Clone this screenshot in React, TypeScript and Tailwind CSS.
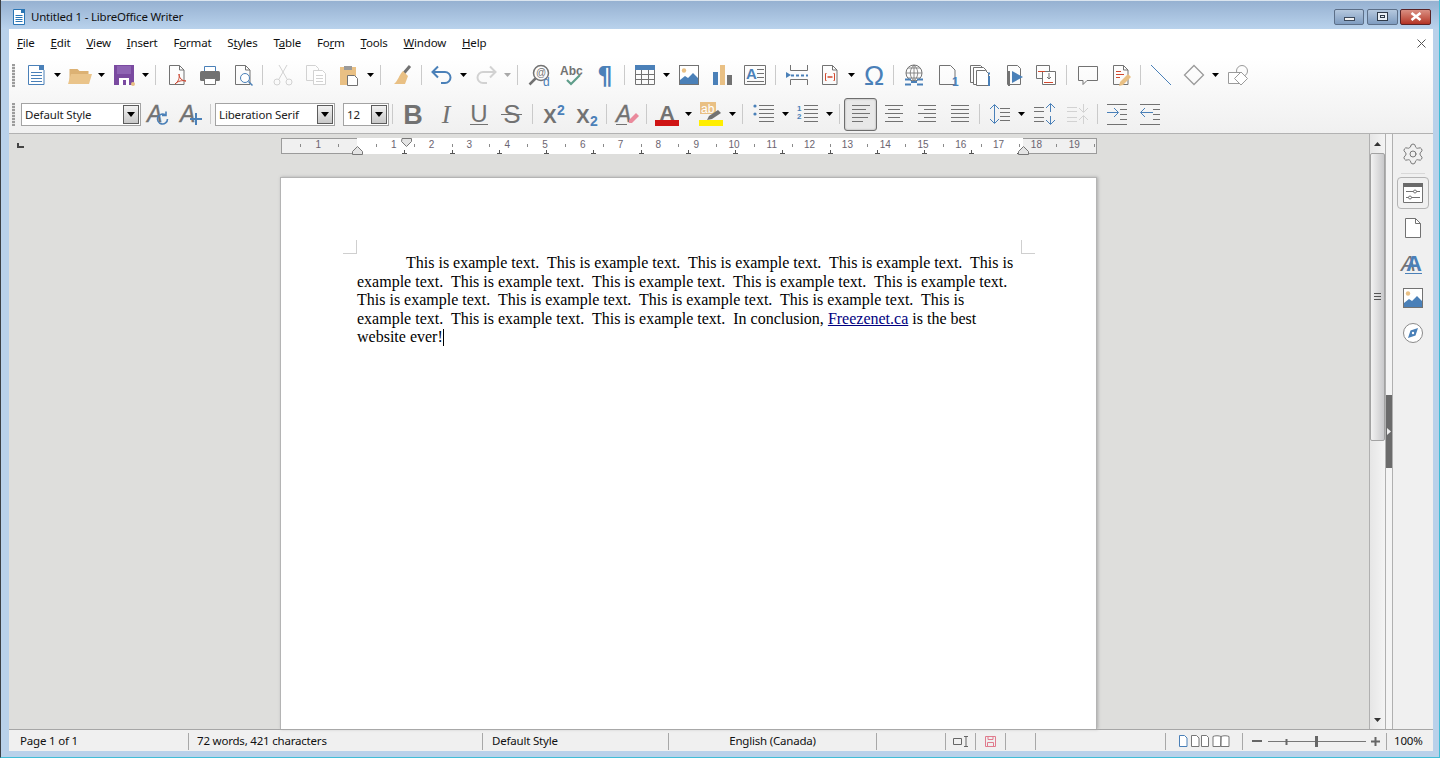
import { Settings } from 'lucide-react'
import type { ReactNode } from 'react'

const BLUE = '#4a80b8'
const GRAY = '#727272'
const LIGHT = '#d2d2d2'
const TAN = '#e9c084'
const SANS = 'Liberation Sans, Arial, sans-serif'
const SERIF = 'Liberation Serif, serif'

const MENUS = [
  ['F', 'ile'], ['E', 'dit'], ['V', 'iew'], ['I', 'nsert'], ['F', 'ormat', 1], ['S', 'tyles', 1],
  ['T', 'able', 1], ['F', 'orm', 2], ['T', 'ools'], ['W', 'indow'], ['H', 'elp'],
] as const

function Ico({ children }: { children: ReactNode }) {
  return (
    <svg width={24} height={24} viewBox="0 0 24 24" fill="none" strokeWidth={1} className="overflow-visible">
      {children}
    </svg>
  )
}

function Tool({ children }: { children: ReactNode }) {
  return <div className="flex h-[33px] w-[33px] shrink-0 items-center justify-center">{children}</div>
}

function Caret({ off }: { off?: boolean }) {
  return (
    <div className="flex h-[33px] w-[11px] shrink-0 items-center justify-center">
      <svg width="7" height="4" viewBox="0 0 7 4">
        <path d="M0 0h7L3.5 4z" fill={off ? '#a8a8a8' : '#000'} />
      </svg>
    </div>
  )
}

function Sep({ wide }: { wide?: boolean }) {
  return (
    <div className={wide ? 'flex w-[9px] shrink-0 justify-center' : 'flex w-[7px] shrink-0 justify-center'}>
      <div className="h-[20px] w-px bg-[#cacaca]" />
    </div>
  )
}

function Grip() {
  return <div className="h-[23px] w-[3px] shrink-0 bg-[repeating-linear-gradient(to_bottom,#9c9c9c_0,#9c9c9c_2px,#e4e4e4_2px,#e4e4e4_3px)]" />
}

function Combo({ label, className }: { label: string; className: string }) {
  return (
    <div className={`flex h-[23px] shrink-0 items-center justify-between border border-[#a3a3a3] bg-white pl-[3px] pr-[1px] text-[11.5px] tracking-[-0.15px] text-[#222] ${className}`}>
      <span className="pt-px">{label}</span>
      <div className="flex h-[19px] w-[16px] items-center justify-center border border-[#5c5c5c] bg-gradient-to-b from-[#f2f2f2] to-[#c8c8c8]">
        <svg width="8" height="5" viewBox="0 0 8 5">
          <path d="M0 0h8L4 5z" fill="#000" />
        </svg>
      </div>
    </div>
  )
}

function PageOutline({ stroke = GRAY }: { stroke?: string }) {
  return <path d="M4.5 2.5h10l4.5 4.5v14.5H4.5zM14.5 2.5V7H19" stroke={stroke} />
}

function Lines({ rows, x1 = 2, x2 = 22, color = GRAY }: { rows: number[]; x1?: number; x2?: number; color?: string }) {
  return <path d={rows.map((y) => `M${x1} ${y}.5H${x2}`).join('')} stroke={color} />
}

function ImageIcon() {
  return (
    <>
      <rect x="2.5" y="2.5" width="19" height="19" fill="#fff" stroke={GRAY} />
      <circle cx="7" cy="7.5" r="2.2" fill={TAN} />
      <path d="M3 21v-4l5-4 3 2 5-5 5 5v6z" fill={BLUE} />
    </>
  )
}

function StyleA() {
  return (
    <text x="1" y="20" fontFamily={SANS} fontSize="23" fontStyle="italic" fill={GRAY} stroke={GRAY} strokeWidth=".4">
      A
    </text>
  )
}

function Bold({ t, x = 12, y = 21, size = 26 }: { t: string; x?: number; y?: number; size?: number }) {
  return (
    <text x={x} y={y} textAnchor="middle" fontFamily={SANS} fontSize={size} fontWeight="700" fill={GRAY}>
      {t}
    </text>
  )
}

function Ruler() {
  const cm = Array.from({ length: 20 }, (_, i) => i)
  const left = 76
  const step = 37.8
  const tabs = Array.from({ length: 14 }, (_, i) => Math.round(left + 47.25 * (i + 1)))
  return (
    <svg width="816" height="17" viewBox="0 0 816 17" className="shrink-0">
      <rect x="0.5" y="0.5" width="815" height="15" fill="#f0f0f0" stroke="#9b9b9b" />
      <rect x="76" y="0" width="666" height="16" fill="#fff" />
      {cm.map((i) => (
        <path key={i} d={`M${Math.round(left + step * (i + 0.5)) + 0.5} 6v3`} stroke="#8a8a8a" />
      ))}
      <path d={`M${left - 19 + 0.5} 6v3M${left - 57 + 0.5} 6v3`} stroke="#8a8a8a" />
      {cm.slice(1).map((i) => (
        <text key={i} x={left + step * i - 1} y="10" textAnchor="middle" fontFamily={SANS} fontSize="10" fill="#6b6470">
          {i}
        </text>
      ))}
      <text x={left - step - 1} y="10" textAnchor="middle" fontFamily={SANS} fontSize="10" fill="#6b6470">
        1
      </text>
      {tabs.map((x) => (
        <path key={x} d={`M${x + 0.5} 12v3.5M${x - 2} 15.5h5`} stroke="#555" />
      ))}
      <path d="M71.5 16.5v-3l5-5 5 5v3z" fill="#e4e4e4" stroke="#777" />
      <path d="M121 .5h9.5v3l-5 5-5-5z" fill="#e4e4e4" stroke="#777" />
      <path d="M737.5 16.5v-3l5-5 5 5v3z" fill="#e4e4e4" stroke="#777" />
    </svg>
  )
}

function StatusCell({ className, children }: { className: string; children?: ReactNode }) {
  return (
    <div className={`flex h-[17px] shrink-0 items-center border-r border-[#a8a8a8] ${className}`}>{children}</div>
  )
}

export default function App() {
  return (
    <div
      className="flex h-[758px] w-[1440px] flex-col overflow-hidden border-x border-b border-b-[#41bdd6] border-l-[#3b3f44] border-r-[#41bdd6] bg-[#b9d1ea] text-[12px]"
      style={{ fontFamily: 'Noto Sans, sans-serif' }}
    >
      {/* title bar */}
      <div className="flex h-[29px] shrink-0 items-center border-t border-[#dbe5ef] bg-gradient-to-b from-[#96b1d1] to-[#b9d2ec] pl-[12px] pr-[8px] pt-[3px]">
        <svg width="12" height="16" viewBox="0 0 12 16" className="shrink-0">
          <path d="M.5.5h8l3 3v12H.5z" fill="#fff" stroke="#2a76b5" />
          <path d="M8 0h4v4H8z" fill="#2a76b5" />
          <path d="M2.5 6.5h7M2.5 8.5h7M2.5 10.5h7M2.5 12.5h7" stroke="#2a76b5" />
        </svg>
        <span className="ml-[6px] pt-px text-[11.5px] tracking-[-0.2px] text-[#111]">Untitled 1 - LibreOffice Writer</span>
        <div className="ml-auto flex gap-[3px]">
          <div className="flex h-[16px] w-[30px] items-end justify-center rounded-[2px] border border-[#5c6f88] bg-gradient-to-b from-[#b5c8de] to-[#7f9cc0] pb-[3px]">
            <div className="h-[4px] w-[11px] border border-[#3d4a5c] bg-[#f1f1f1]" />
          </div>
          <div className="flex h-[16px] w-[31px] items-center justify-center rounded-[2px] border border-[#5c6f88] bg-gradient-to-b from-[#b5c8de] to-[#7f9cc0]">
            <div className="flex h-[9px] w-[11px] items-center justify-center border border-[#2f3a49] bg-[#e8eef5]">
              <div className="h-[3px] w-[5px] border border-[#2f3a49]" />
            </div>
          </div>
          <div className="-ml-px flex h-[16px] w-[31px] items-center justify-center rounded-[2px] border border-[#5a2326] bg-gradient-to-b from-[#d98e82] to-[#b33224]">
            <svg width="12" height="9" viewBox="0 0 12 9">
              <path d="M1.5 1l9 7M10.5 1l-9 7" stroke="#fff" strokeWidth="2.6" />
            </svg>
          </div>
        </div>
      </div>

      <div className="ml-[8px] mr-[6px] flex min-h-0 flex-1 flex-col">
        {/* menu bar */}
        <div className="flex h-[28px] shrink-0 items-center gap-4 bg-white pl-[8px] pr-[7px] text-[11.5px] tracking-[-0.2px] text-[#111]">
          {MENUS.map(([a, b, pos]) => {
            const word = a + b
            const i = pos ?? 0
            return (
              <span key={word}>
                {word.slice(0, i)}
                <span className="underline">{word[i]}</span>
                {word.slice(i + 1)}
              </span>
            )
          })}
          <svg width="9" height="9" viewBox="0 0 9 9" className="ml-auto">
            <path d="M.5.5l8 8M8.5.5l-8 8" stroke="#555" />
          </svg>
        </div>

        {/* toolbars */}
        <div className="flex h-[77px] shrink-0 flex-col gap-[2px] border-b border-[#b2b2b2] bg-gradient-to-b from-white to-[#f0f0f0]">
          <div className="flex h-[36px] items-center pl-[3px]">
            <Grip />
            <div className="w-[4px] shrink-0" />
            <Tool>
              <Ico>
                <path d="M4.5 2.5h11l4.5 4.5v14.5H4.5z" stroke={BLUE} fill="#fff" />
                <path d="M15 2h5v5h-5z" fill={BLUE} />
                <Lines rows={[9, 12, 15, 18]} x1={7} x2={18} color={BLUE} />
              </Ico>
            </Tool>
            <Caret />
            <Tool>
              <Ico>
                <path d="M1.5 20V6h8l2 2h9v12z" fill="#dcb173" />
                <path d="M3 11h21l-3 10H0z" fill="#eac48a" />
              </Ico>
            </Tool>
            <Caret />
            <Tool>
              <Ico>
                <path d="M2 2h20v20H2z" fill="#7a4aa0" />
                <path d="M5 3h14v8H5z" fill="#8e64b3" />
                <path d="M7 15h10v7H7z" fill="#fff" />
                <path d="M11 17h3v5h-3z" fill="#7a4aa0" />
                <circle cx="21" cy="21" r="2" fill={TAN} />
              </Ico>
            </Tool>
            <Caret />
            <Sep wide />
            <Tool>
              <Ico>
                <PageOutline />
                <path d="M10 21c3-2 5-6 4-10 0 4 3 7 7 7-4-1-8 0-11 3z" stroke="#cc4a35" />
              </Ico>
            </Tool>
            <Tool>
              <Ico>
                <path d="M6.5 3.5h11v6h-11z" stroke={BLUE} fill="#fff" />
                <rect x="2" y="8" width="20" height="10" rx="1.5" fill={GRAY} />
                <path d="M6.5 15.5h11v6h-11z" fill="#fff" stroke={GRAY} />
              </Ico>
            </Tool>
            <Tool>
              <Ico>
                <PageOutline />
                <circle cx="14" cy="15" r="4.5" fill="#fff" stroke={BLUE} />
                <path d="M17.5 18.5l4 4" stroke={BLUE} strokeWidth="1.5" />
              </Ico>
            </Tool>
            <Sep />
            <Tool>
              <Ico>
                <path d="M8 2l8 14M16 2L8 16" stroke={LIGHT} />
                <circle cx="6" cy="19" r="3" stroke={LIGHT} />
                <circle cx="18" cy="19" r="3" stroke={LIGHT} />
              </Ico>
            </Tool>
            <Tool>
              <Ico>
                <path d="M2.5 2.5h9l3 3v12h-12z" stroke={LIGHT} />
                <path d="M9.5 7.5h9l3 3v11h-12z" fill="#fff" stroke={LIGHT} />
                <Lines rows={[12, 15, 18]} x1={12} x2={19} color={LIGHT} />
              </Ico>
            </Tool>
            <Tool>
              <Ico>
                <path d="M3 4h16v18H3z" fill={TAN} />
                <path d="M7 3h8v4H7z" fill="#9a9a9a" />
                <path d="M10.5 12.5h7l3 3v7h-10z" fill="#fff" stroke={GRAY} />
              </Ico>
            </Tool>
            <Caret />
            <Sep wide />
            <Tool>
              <Ico>
                <path d="M14 10l6-7" stroke={GRAY} strokeWidth="3" />
                <path d="M13 8l5 5-3 8H4c4-3 5-9 9-13z" fill={TAN} />
              </Ico>
            </Tool>
            <Sep />
            <Tool>
              <Ico>
                <path d="M3 9h12a5.5 5.5 0 0 1 0 11h-4M8 3.5L2.5 9 8 14.5" stroke={BLUE} strokeWidth="2" />
              </Ico>
            </Tool>
            <Caret />
            <Tool>
              <Ico>
                <path d="M21 9H9a5.5 5.5 0 0 0 0 11h4M16 3.5L21.5 9 16 14.5" stroke={LIGHT} strokeWidth="2" />
              </Ico>
            </Tool>
            <Caret off />
            <Sep wide />
            <Tool>
              <Ico>
                <circle cx="14" cy="10" r="7.5" stroke={GRAY} strokeWidth="1.5" />
                <path d="M8.5 15.5l-6 6" stroke={GRAY} strokeWidth="2.5" />
                <text x="14" y="13" textAnchor="middle" fontFamily={SANS} fontSize="10" fill={GRAY}>@</text>
                <text x="16" y="23" fontFamily={SANS} fontSize="12" fill={BLUE}>d</text>
              </Ico>
            </Tool>
            <Tool>
              <Ico>
                <text x="0" y="12" fontFamily={SANS} fontSize="12" fontWeight="700" fill={GRAY}>Abc</text>
                <path d="M7 17l4 4 9-9" stroke="#5f9d8a" strokeWidth="2.2" />
              </Ico>
            </Tool>
            <Tool>
              <Ico>
                <text x="12" y="21" textAnchor="middle" fontFamily="DejaVu Sans, sans-serif" fontSize="24" fontWeight="700" fill={BLUE}>¶</text>
              </Ico>
            </Tool>
            <Sep />
            <Tool>
              <Ico>
                <path d="M2 2h20v5H2z" fill={BLUE} />
                <path d="M2.5 7v14.5h19V7M2.5 11.5h19M2.5 16.5h19M8.5 7v14M15.5 7v14" stroke={GRAY} />
              </Ico>
            </Tool>
            <Caret />
            <Tool>
              <Ico><ImageIcon /></Ico>
            </Tool>
            <Tool>
              <Ico>
                <path d="M3 9h5v13H3z" fill={BLUE} />
                <path d="M10 2h5v20h-5z" fill={TAN} />
                <path d="M17 12h5v10h-5z" fill={GRAY} />
              </Ico>
            </Tool>
            <Tool>
              <Ico>
                <path d="M1.5 2.5h21v19h-21z" stroke={GRAY} />
                <text x="3" y="16" fontFamily={SANS} fontSize="15" fontWeight="700" fill={BLUE}>A</text>
                <Lines rows={[6, 10, 14]} x1={14} x2={21} />
                <Lines rows={[18]} x1={4} x2={21} />
              </Ico>
            </Tool>
            <Sep wide />
            <Tool>
              <Ico>
                <path d="M1 9l5 3-5 3z" fill={BLUE} />
                <path d="M6 12.5h3m2 0h3m2 0h3m2 0h2" stroke={BLUE} strokeWidth="2" />
                <path d="M5.5 2v5.5h17V2M5.5 22v-5.5h17V22" stroke={GRAY} />
              </Ico>
            </Tool>
            <Tool>
              <Ico>
                <PageOutline />
                <path d="M8.5 10.5h-1v7h1M15.5 10.5h1v7h-1" stroke="#d1492f" />
                <path d="M9.5 14h5" stroke="#d1492f" strokeWidth="1.5" />
              </Ico>
            </Tool>
            <Caret />
            <Tool>
              <Ico>
                <text x="12" y="22" textAnchor="middle" fontFamily={SANS} fontSize="27" fill={BLUE}>Ω</text>
              </Ico>
            </Tool>
            <Sep />
            <Tool>
              <Ico>
                <circle cx="12" cy="10" r="8" stroke={GRAY} />
                <path d="M12 2v16M4 10h16M6 5h12M6 15h12M12 2c-5 5-5 11 0 16M12 2c5 5 5 11 0 16" stroke={GRAY} strokeWidth=".8" />
                <path d="M3 16.5h6m6 0h6M3 21.5h6m6 0h6M9 19h6" stroke={BLUE} strokeWidth="2" />
              </Ico>
            </Tool>
            <Tool>
              <Ico>
                <path d="M4.5 2.5h11l4.5 4.5v14.5H4.5z" stroke={GRAY} />
                <text x="17" y="23" fontFamily={SANS} fontSize="12" fontWeight="700" fill={BLUE}>1</text>
              </Ico>
            </Tool>
            <Tool>
              <Ico>
                <path d="M2.5 2.5h10l3 3v14h-13z" stroke={GRAY} />
                <path d="M5.5 4.5h10l3 3v14h-13z" fill="#fff" stroke={GRAY} />
                <path d="M8.5 7.5h9l3 3v12h-12z" fill="#fff" stroke={GRAY} />
                <path d="M20 13h2v10h-2zM20 9.5h2v2h-2z" fill={BLUE} />
              </Ico>
            </Tool>
            <Tool>
              <Ico>
                <path d="M6.5 2.5h10l3 3v16h-13z" stroke={GRAY} />
                <path d="M7 8h2v15H7z" fill={GRAY} />
                <path d="M11 8l11 6-11 6z" fill={BLUE} />
              </Ico>
            </Tool>
            <Tool>
              <Ico>
                <path d="M2.5 2.5h13v13h-13z" stroke={GRAY} />
                <path d="M8.5 8.5h13v13h-13z" fill="#fff" stroke={GRAY} />
                <path d="M4 8.5h7" stroke="#d1492f" />
                <path d="M10 19.5h9" stroke="#d1492f" />
                <path d="M15 10v6M13 14l2 2 2-2" stroke={GRAY} />
              </Ico>
            </Tool>
            <Sep wide />
            <Tool>
              <Ico>
                <path d="M2.5 3.5h19v14H11l-4 4v-4H2.5z" stroke={GRAY} />
              </Ico>
            </Tool>
            <Tool>
              <Ico>
                <PageOutline />
                <path d="M7 8.5h5M7 11.5h8M7 14.5h4" stroke="#d1492f" />
                <path d="M10 23l1-4 8-8 3 3-8 8z" fill={TAN} />
              </Ico>
            </Tool>
            <Sep />
            <Tool>
              <Ico>
                <path d="M2 2l20 20" stroke={BLUE} />
              </Ico>
            </Tool>
            <Tool>
              <Ico>
                <path d="M12 2.5L21.5 12 12 21.5 2.5 12z" stroke="#9a9a9a" strokeWidth="1.3" />
              </Ico>
            </Tool>
            <Caret />
            <Tool>
              <Ico>
                <circle cx="16" cy="8" r="5.5" stroke="#9a9a9a" />
                <path d="M2.5 9.5h12v11h-12z" fill="#fff" stroke="#9a9a9a" />
                <path d="M15 9l6.5 6.5L15 22l-6.5-6.5z" fill="#fff" stroke="#9a9a9a" />
              </Ico>
            </Tool>
          </div>

          <div className="flex h-[38px] items-center pl-[3px]">
            <Grip />
            <div className="w-[6px] shrink-0" />
            <Combo label="Default Style" className="w-[120px]" />
            <Tool>
              <Ico>
                <StyleA />
                <path d="M21.5 17a5 5 0 1 1-2-4M20 9.5v4h-4" stroke={BLUE} strokeWidth="1.6" />
              </Ico>
            </Tool>
            <Tool>
              <Ico>
                <StyleA />
                <path d="M17 11v12M11 17h12" stroke={BLUE} strokeWidth="2" />
              </Ico>
            </Tool>
            <Sep />
            <div className="w-px shrink-0" />
            <Combo label="Liberation Serif" className="w-[120px]" />
            <Combo label="12" className="ml-2 w-[46px]" />
            <Sep />
            <Tool><Ico><Bold t="B" y={22} size={27} /></Ico></Tool>
            <Tool>
              <Ico>
                <text x="12" y="21" textAnchor="middle" fontFamily={SERIF} fontSize="26" fontStyle="italic" fill={GRAY}>I</text>
              </Ico>
            </Tool>
            <Tool>
              <Ico>
                <text x="12" y="20" textAnchor="middle" fontFamily={SANS} fontSize="24" fill={GRAY}>U</text>
                <path d="M3 22.5h18" stroke={GRAY} />
              </Ico>
            </Tool>
            <Tool>
              <Ico>
                <text x="12" y="21" textAnchor="middle" fontFamily={SANS} fontSize="26" fill={GRAY}>S</text>
                <path d="M1 12.5h21" stroke={GRAY} />
              </Ico>
            </Tool>
            <Sep wide />
            <Tool>
              <Ico>
                <Bold t="X" x={8} size={20} />
                <text x="15" y="13" fontFamily={SANS} fontSize="14" fontWeight="700" fill={BLUE}>2</text>
              </Ico>
            </Tool>
            <Tool>
              <Ico>
                <Bold t="X" x={8} size={20} />
                <text x="15" y="23.5" fontFamily={SANS} fontSize="14" fontWeight="700" fill={BLUE}>2</text>
              </Ico>
            </Tool>
            <Sep />
            <Tool>
              <Ico>
                <StyleA />
                <path d="M1 22.5h11" stroke={GRAY} />
                <path d="M14 18l7-7 3 3-7 7h-3z" fill="#ea8a9c" />
              </Ico>
            </Tool>
            <Sep />
            <Tool>
              <Ico>
                <text x="12" y="18" textAnchor="middle" fontFamily={SANS} fontSize="21" fontWeight="700" fill={GRAY}>A</text>
                <path d="M0 18h24v6H0z" fill="#cf1414" />
              </Ico>
            </Tool>
            <Caret />
            <Tool>
              <Ico>
                <path d="M1 0h16v12H1z" fill={TAN} />
                <text x="2" y="11" fontFamily={SANS} fontSize="12" fill="#fff">ab</text>
                <path d="M8 18l2-4 9-6 3 3-9 6z" fill={GRAY} />
                <path d="M0 18h24v6H0z" fill="#ffee00" />
              </Ico>
            </Tool>
            <Caret />
            <Sep wide />
            <Tool>
              <Ico>
                <circle cx="3" cy="4" r="1.6" fill={BLUE} />
                <circle cx="3" cy="12" r="1.6" fill={BLUE} />
                <Lines rows={[3, 7, 11, 15, 19]} x1={7} x2={22} />
              </Ico>
            </Tool>
            <Caret />
            <Tool>
              <Ico>
                <text x="1" y="9" fontFamily={SANS} fontSize="8" fontWeight="700" fill={BLUE}>1</text>
                <text x="1" y="17" fontFamily={SANS} fontSize="8" fontWeight="700" fill={BLUE}>2</text>
                <Lines rows={[3, 7, 11, 15, 19]} x1={8} x2={22} />
              </Ico>
            </Tool>
            <Caret />
            <Sep wide />
            <div className="flex h-[33px] w-[33px] shrink-0 items-center justify-center rounded-[3px] border border-[#6e6e6e] bg-[#e8e8e8] shadow-[inset_0_0_2px_#999]">
              <Ico>
                <path d="M3 3.5h18M3 7.5h14M3 11.5h18M3 15.5h16M3 19.5h11" stroke={GRAY} />
              </Ico>
            </div>
            <Tool>
              <Ico>
                <path d="M3 3.5h18M6 7.5h12M3 11.5h18M6 15.5h12M3 19.5h18" stroke={GRAY} />
              </Ico>
            </Tool>
            <Tool>
              <Ico>
                <path d="M3 3.5h18M9 7.5h12M3 11.5h18M9 15.5h12M3 19.5h18" stroke={GRAY} />
              </Ico>
            </Tool>
            <Tool>
              <Ico><Lines rows={[3, 7, 11, 15, 19]} x1={3} x2={21} /></Ico>
            </Tool>
            <Sep />
            <Tool>
              <Ico>
                <path d="M6.5 3v18M2 7l4.5-4.5L11 7M2 17l4.5 4.5L11 17" stroke={BLUE} />
                <Lines rows={[6, 10, 14, 18]} x1={12} x2={22} />
              </Ico>
            </Tool>
            <Caret />
            <div className="w-px shrink-0" />
            <Tool>
              <Ico>
                <Lines rows={[5, 9, 15, 19]} x1={1} x2={11} />
                <path d="M17.5 10V2M13 6l4.5-4.5L22 6M17.5 14v8M13 18l4.5 4.5L22 18" stroke={BLUE} />
              </Ico>
            </Tool>
            <Tool>
              <Ico>
                <Lines rows={[5, 9, 15, 19]} x1={1} x2={11} color={LIGHT} />
                <path d="M17.5 2v8M13 6l4.5 4.5L22 6M17.5 22v-8M13 18l4.5-4.5L22 18" stroke={LIGHT} />
              </Ico>
            </Tool>
            <div className="flex w-[6px] shrink-0 justify-center"><div className="h-[20px] w-px bg-[#cacaca]" /></div>
            <Tool>
              <Ico>
                <path d="M2 10.5h11M9 6l4.5 4.5L9 15" stroke={BLUE} />
                <Lines rows={[2, 22]} x1={2} x2={22} />
                <Lines rows={[7, 12, 17]} x1={15} x2={22} />
              </Ico>
            </Tool>
            <Tool>
              <Ico>
                <path d="M15 10.5H3M7 6l-4.5 4.5L7 15" stroke={BLUE} />
                <Lines rows={[2, 22]} x1={2} x2={22} />
                <Lines rows={[7, 12, 17]} x1={15} x2={22} />
              </Ico>
            </Tool>
          </div>
        </div>

        {/* body */}
        <div className="flex min-h-0 flex-1">
          <div className="flex w-[1360px] shrink-0 flex-col bg-[#dededc] pt-[4px]">
            <div className="flex h-[17px] shrink-0 items-center">
              <svg width="7" height="5" viewBox="0 0 7 5" className="mb-[3px] ml-[8px] shrink-0">
                <path d="M0 0h2v3h5v2H0z" fill="#444" />
              </svg>
              <div className="w-[257px] shrink-0" />
              <Ruler />
            </div>
            <div className="relative ml-[271px] mt-[22px] w-[817px] flex-1 border-x border-t border-[#b4b4b4] bg-white pl-[76px] pt-[76px] shadow-[1px_0_3px_#aaa]" style={{ fontFamily: SERIF }}>
              <div className="absolute left-[62px] top-[62px] h-[14px] w-[14px] border-b border-r border-[#cfcfcf]" />
              <div className="absolute left-[740px] top-[62px] h-[14px] w-[14px] border-b border-l border-[#cfcfcf]" />
              <div className="whitespace-pre text-[16px] leading-[18.5px] text-black">
                <div className="pl-[49px]">This is example text.  This is example text.  This is example text.  This is example text.  This is</div>
                <div>example text.  This is example text.  This is example text.  This is example text.  This is example text.</div>
                <div>This is example text.  This is example text.  This is example text.  This is example text.  This is</div>
                <div>example text.  This is example text.  This is example text.  In conclusion, <span className="text-[#000080] underline">Freezenet.ca</span> is the best</div>
                <div className="flex items-center">website ever!<span className="h-[17px] w-px bg-black" /></div>
              </div>
            </div>
          </div>

          {/* scrollbar */}
          <div className="flex w-[17px] shrink-0 flex-col border-x border-[#b0b0b0] bg-gradient-to-r from-[#e6e6e6] to-[#f4f4f4]">
            <div className="flex h-[19px] shrink-0 items-center justify-center">
              <svg width="7" height="4" viewBox="0 0 7 4"><path d="M3.5 0L7 4H0z" fill="#333" /></svg>
            </div>
            <div className="flex h-[288px] shrink-0 items-center justify-center rounded-[2px] border border-[#a2a2a2] bg-gradient-to-r from-[#f2f2f2] to-[#c9c9cb]">
              <svg width="7" height="8" viewBox="0 0 7 8"><path d="M0 .5h7M0 3.5h7M0 6.5h7" stroke="#555" /></svg>
            </div>
            <div className="flex-1" />
            <div className="flex h-[18px] shrink-0 items-center justify-center">
              <svg width="7" height="4" viewBox="0 0 7 4"><path d="M0 0h7L3.5 4z" fill="#333" /></svg>
            </div>
          </div>

          {/* sidebar handle */}
          <div className="flex w-[7px] shrink-0 flex-col border-r border-[#b0b0b0] bg-[#f4f4f4]">
            <div className="h-[261px] shrink-0" />
            <div className="flex h-[73px] shrink-0 items-center bg-[#6b6b6b] pl-px">
              <svg width="4" height="7" viewBox="0 0 4 7"><path d="M0 0l4 3.5L0 7z" fill="#eee" /></svg>
            </div>
          </div>

          {/* sidebar */}
          <div className="flex min-w-0 flex-1 flex-col items-center bg-[#f0f0f0]">
            <Settings size={24} strokeWidth={1} color="#777" className="mt-[8px] shrink-0" />
            <div className="mt-[7px] h-px w-[24px] bg-[#d8d8d8]" />
            <div className="mt-[3px] flex h-[32px] w-[32px] items-center justify-center rounded-[4px] border border-[#b4b4b4]">
              <Ico>
                <path d="M2.5 2.5h19v19h-19z" fill="#fff" stroke={GRAY} />
                <path d="M2 2h20v4H2z" fill="#6a6a6a" />
                <path d="M5 10.5h14M5 16.5h14" stroke={GRAY} />
                <circle cx="14" cy="10.5" r="1.5" fill="#fff" stroke={GRAY} />
                <circle cx="9" cy="16.5" r="1.5" fill="#fff" stroke={GRAY} />
              </Ico>
            </div>
            <div className="mt-px flex h-[35px] items-center">
              <Ico><path d="M4.5 2.5h10l5 5v14h-15z" fill="#fff" stroke={GRAY} /><path d="M14.5 2.5v5h5" stroke={GRAY} /></Ico>
            </div>
            <div className="flex h-[35px] items-center">
              <Ico>
                <text x="0" y="20" fontFamily={SANS} fontSize="22" fontStyle="italic" fill={GRAY}>A</text>
                <text x="5" y="20" fontFamily={SANS} fontSize="22" fontWeight="700" fill={BLUE}>A</text>
                <path d="M4 22.5h17" stroke={BLUE} />
              </Ico>
            </div>
            <div className="flex h-[35px] items-center">
              <Ico><ImageIcon /></Ico>
            </div>
            <div className="flex h-[35px] items-center">
              <Ico>
                <circle cx="12" cy="12" r="9.5" fill="#fff" stroke="#8a8a8a" />
                <path d="M17 7l-2.5 7.5L7 17l2.5-7.5z" fill={BLUE} />
                <circle cx="12" cy="12" r="1.2" fill="#fff" />
              </Ico>
            </div>
          </div>
        </div>

        {/* status bar */}
        <div className="flex h-[22px] shrink-0 items-center border-t border-[#a6a6a6] bg-[#f0f0f0] pt-px text-[11.5px] tracking-[-0.2px] text-[#111]">
          <StatusCell className="w-[180px] pl-[11px]">Page 1 of 1</StatusCell>
          <StatusCell className="w-[294px] pl-[8px]">72 words, 421 characters</StatusCell>
          <StatusCell className="w-[186px] pl-[9px]">Default Style</StatusCell>
          <StatusCell className="w-[208px] justify-center">English (Canada)</StatusCell>
          <StatusCell className="w-[69px]" />
          <StatusCell className="w-[30px] justify-center">
            <svg width="16" height="11" viewBox="0 0 16 11">
              <path d="M.5 2.5h8v6h-8zM11 .5h4M11 10.5h4M13 .5v10" stroke="#666" fill="none" />
            </svg>
          </StatusCell>
          <StatusCell className="w-[30px] justify-center">
            <svg width="11" height="11" viewBox="0 0 11 11">
              <path d="M.5.5h10v10H.5zM3 .5v3h5v-3M2.5 10.5v-4h6v4" stroke="#e07b8d" fill="none" />
            </svg>
          </StatusCell>
          <StatusCell className="w-[30px]" />
          <StatusCell className="w-[130px]" />
          <StatusCell className="w-[77px] justify-center gap-[3px]">
            <svg width="10" height="12" viewBox="0 0 10 12"><path d="M1.5.5h5l2.5 2.5v8.5H1.5z" fill="#fff" stroke={BLUE} /></svg>
            <svg width="18" height="12" viewBox="0 0 18 12"><path d="M.5.5h5l2.5 2.5v8.5H.5zM10.5.5h5l2 2v9h-7z" fill="#fff" stroke="#777" /></svg>
            <svg width="18" height="12" viewBox="0 0 18 12"><path d="M9 1.5C7 .5 3 .5 1 1.5v10h7.500zM9 1.5c2-1 6-1 8 0v10H9z" fill="#fff" stroke="#777" /></svg>
          </StatusCell>
          <StatusCell className="w-[144px] pl-[9px]">
            <svg width="130" height="13" viewBox="0 0 130 13" fill="none">
              <path d="M0 6h10" stroke="#666" strokeWidth="2" />
              <path d="M16 6.5h98" stroke="#777" />
              <path d="M34.5 4v6" stroke="#666" strokeWidth="2" />
              <path d="M63 1h3v11h-3z" fill="#666" />
              <path d="M119 6.5h9M123.5 2v9" stroke="#666" strokeWidth="2" />
            </svg>
          </StatusCell>
          <div className="flex-1 pl-[7px]">100%</div>
        </div>
      </div>
      <div className="h-[6px] shrink-0" />
    </div>
  )
}
